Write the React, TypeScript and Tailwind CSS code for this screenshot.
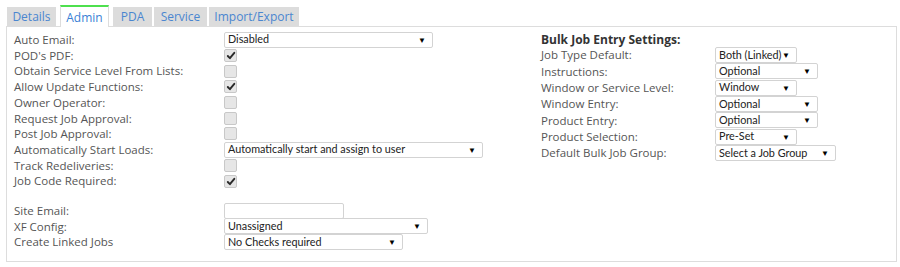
import React from "react";

function Check({ on }: { on?: boolean }) {
  return (
    <div className="w-[13px] h-[13px] rounded-[2px] border border-[#c8c8c8] bg-[#e6e6e6] flex items-center justify-center">
      {on && (
        <svg width="10" height="9" viewBox="0 0 10 9">
          <path d="M1.8 5 L3.9 7.2 L8.3 1.8" stroke="#2a2a2a" strokeWidth="1.9" fill="none" strokeLinecap="round" strokeLinejoin="round" />
        </svg>
      )}
    </div>
  );
}

function Select({ value, w }: { value: string; w: string }) {
  return (
    <div
      className={`${w} h-[16px] border border-[#d3d3d3] rounded-[2px] bg-white flex items-center justify-between pl-[3px] pr-[6px] font-['Lato','Noto_Sans',sans-serif] text-[10.8px] text-[#222] leading-none whitespace-nowrap`}
    >
      <span>{value}</span>
      <span className="text-[8px] text-black">▼</span>
    </div>
  );
}

type Row = { label: string; ctrl: React.ReactNode };

const leftRows: Row[] = [
  { label: "Auto Email:", ctrl: <Select value="Disabled" w="w-[209px]" /> },
  { label: "POD's PDF:", ctrl: <Check on /> },
  { label: "Obtain Service Level From Lists:", ctrl: <Check /> },
  { label: "Allow Update Functions:", ctrl: <Check on /> },
  { label: "Owner Operator:", ctrl: <Check /> },
  { label: "Request Job Approval:", ctrl: <Check /> },
  { label: "Post Job Approval:", ctrl: <Check /> },
  { label: "Automatically Start Loads:", ctrl: <Select value="Automatically start and assign to user" w="w-[259px]" /> },
  { label: "Track Redeliveries:", ctrl: <Check /> },
  { label: "Job Code Required:", ctrl: <Check on /> },
];

const siteRows: Row[] = [
  { label: "Site Email:", ctrl: <div className="w-[120px] h-[16px] border border-[#d3d3d3] rounded-[2px] bg-white" /> },
  { label: "XF Config:", ctrl: <Select value="Unassigned" w="w-[204px]" /> },
  { label: "Create Linked Jobs", ctrl: <Select value="No Checks required" w="w-[179px]" /> },
];

const bulkRows: Row[] = [
  { label: "Job Type Default:", ctrl: <Select value="Both (Linked)" w="w-[82px]" /> },
  { label: "Instructions:", ctrl: <Select value="Optional" w="w-[103px]" /> },
  { label: "Window or Service Level:", ctrl: <Select value="Window" w="w-[82px]" /> },
  { label: "Window Entry:", ctrl: <Select value="Optional" w="w-[103px]" /> },
  { label: "Product Entry:", ctrl: <Select value="Optional" w="w-[103px]" /> },
  { label: "Product Selection:", ctrl: <Select value="Pre-Set" w="w-[82px]" /> },
  { label: "Default Bulk Job Group:", ctrl: <Select value="Select a Job Group" w="w-[121px]" /> },
];

function FieldRow({ row }: { row: Row }) {
  return (
    <div className="flex items-center h-[15.7px]">
      <div className="w-[210px] text-[11.5px] text-[#555] leading-none whitespace-nowrap">{row.label}</div>
      {row.ctrl}
    </div>
  );
}

const tabs = [
  { name: "Details", w: "w-[49px]" },
  { name: "Admin", w: "w-[49px]", active: true },
  { name: "PDA", w: "w-[39px]" },
  { name: "Service", w: "w-[53px]" },
  { name: "Import/Export", w: "w-[90px]" },
];

export default function App() {
  return (
    <div className="w-[900px] h-[267px] bg-white pt-[5px] font-['Open_Sans','DejaVu_Sans',sans-serif]">
      <div className="flex gap-[2px] ml-[7px] relative z-10">
        {tabs.map((t) =>
          t.active ? (
            <div
              key={t.name}
              className={`${t.w} h-[22px] -mb-[1px] pt-[1px] mx-[2px] bg-white border-x border-[#ddd] border-t-2 border-t-[#4ee04e] text-[#3a7fd5] text-[12px] flex items-center justify-center`}
            >
              {t.name}
            </div>
          ) : (
            <div
              key={t.name}
              className={`${t.w} h-[19px] mt-[2px] pt-[1px] bg-[#dcdcdc] text-[#4a86d0] text-[12px] flex items-center justify-center`}
            >
              {t.name}
            </div>
          )
        )}
      </div>
      <div className="ml-[6px] w-[891px] h-[236px] border border-[#dddddd] flex pt-[5px]">
        <div className="w-[527px] pl-[7px]">
          {leftRows.map((r) => (
            <FieldRow key={r.label} row={r} />
          ))}
          <div className="h-[14px]" />
          {siteRows.map((r) => (
            <FieldRow key={r.label} row={r} />
          ))}
        </div>
        <div className="pl-[7px]">
          <div className="h-[15px] flex items-center text-[12px] font-bold text-[#333]">Bulk Job Entry Settings:</div>
          {bulkRows.map((r) => (
            <div key={r.label} className="flex items-center h-[16.3px]">
              <div className="w-[174px] text-[11.5px] text-[#555] leading-none whitespace-nowrap">{r.label}</div>
              {r.ctrl}
            </div>
          ))}
        </div>
      </div>
    </div>
  );
}
